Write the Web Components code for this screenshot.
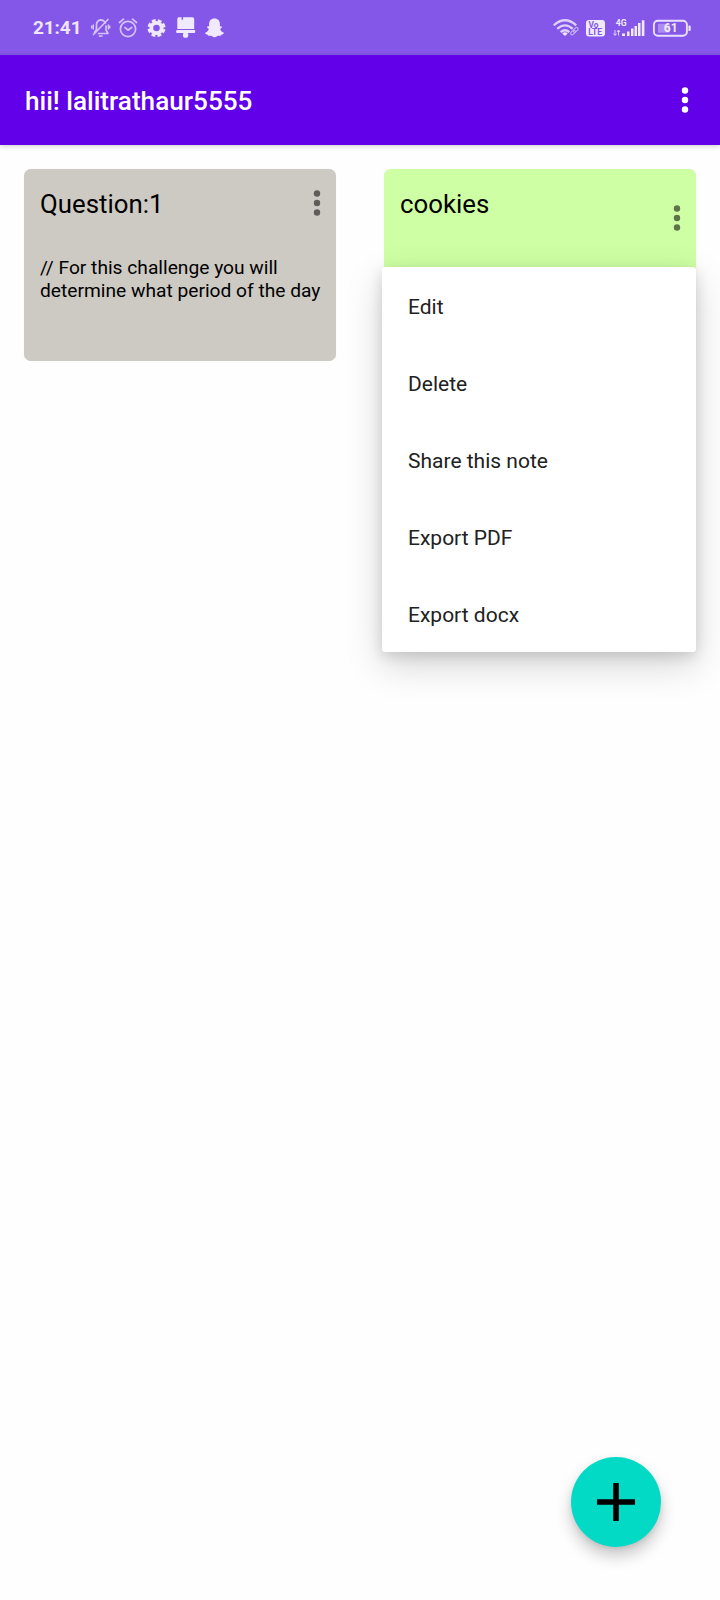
<!DOCTYPE html>
<html lang="en">
<head>
<meta charset="utf-8">
<title>Notes</title>
<style>
body { margin: 0; font-family: Roboto, sans-serif; background: #fff; }
</style>
</head>
<body>
<notes-app></notes-app>
<script>
const define = (name, html) => customElements.define(name, class extends HTMLElement {
  constructor() {
    super();
    const t = document.createElement('template');
    t.innerHTML = html;
    this.attachShadow({ mode: 'open' }).append(t.content.cloneNode(true));
  }
});

define('status-bar', `
<style>
:host { display: flex; justify-content: space-between; height: 55px; box-sizing: border-box; padding: 0 29px 0 33px; background: #8557e9; color: #efe6fd; }
.side { display: flex; }
.time { width: 57px; font: 700 19px/56px Roboto, sans-serif; letter-spacing: -.1px; }
svg { display: block; height: 55px; fill: #f1e9fe; overflow: visible; }
.l { fill: none; stroke: #d4c2f8; stroke-width: 1.7; stroke-linecap: round; stroke-linejoin: round; }
text { font-family: Roboto, sans-serif; font-weight: 700; }
</style>
<div class="side">
  <span class="time">21:41</span>
  <svg width="25" viewBox="90 0 25 55"><g class="l">
    <path d="M94.500 32.500l2-3V25q0-4.500 4-5.200q3.500.2 4.800 3.200M106 26v4l2 3.500H98.500M99.500 36h2.500M93.500 34.500L108 19.500"/>
    <path d="M93.300 25v4M91.700 26v2M108.300 25v4M109.700 26v2" stroke-width="1.400"/></g></svg>
  <svg width="30" viewBox="115 0 30 55"><g class="l">
    <circle cx="128" cy="29" r="7.600"/><path d="M125 27.500l3 2.700 3.700-2.700M119.500 22.500l4-3.300M136.500 22.500l-4-3.300"/></g></svg>
  <svg width="26" viewBox="145 0 26 55"><g fill="none" stroke="#f1e9fe">
    <circle cx="156.500" cy="28" r="5.200" stroke-width="3.800"/>
    <circle cx="156.500" cy="28" r="7.700" stroke-width="2.600" stroke-dasharray="3.900 2.147" transform="rotate(8 156.500 28)"/></g></svg>
  <svg width="30" viewBox="171 0 30 55"><path d="M179 17.300h2.600v3l1.500-1.100v-1.900h9.400q1.700 0 1.700 1.700v10h-16.900V19q0-1.700 1.700-1.700z"/><rect x="176.200" y="30" width="19" height="3" rx="1"/><rect x="183" y="32.500" width="5.200" height="5.200" rx="1.800"/></svg>
  <svg width="26" viewBox="201 0 26 55"><path d="M214.500 18.500c3.600 0 5.400 2.400 5.400 5.700v2.300c1-.4 2.400.1 1.800 1-.4.800-1.500 1-1.500 1.800.5 2 2.200 3 3.700 3.500.3 1.400-1.700 1.600-2.600 1.900-.2 1-.6 1.200-2.900 1-1.500.3-2 1.500-3.900 1.500s-2.400-1.200-3.900-1.500c-2.300.2-2.700 0-2.900-1-.9-.3-2.900-.5-2.600-1.900 1.500-.5 3.200-1.500 3.700-3.500 0-.8-1.100-1-1.500-1.800-.6-.9.800-1.400 1.800-1v-2.300c0-3.300 1.800-5.700 5.400-5.700z"/></svg>
</div>
<div class="side">
  <svg width="31" viewBox="552 0 31 55"><g fill="none" stroke="#dfd0fa" stroke-width="2.300">
    <path d="M553.800 25.300Q565 15.300 576.200 25.300M557.200 28.800Q565 21.900 572.800 28.800M560.600 32.100Q565 28.300 569.400 32.100"/></g>
    <path d="M562.300 33.400q2.700-2.200 5.400 0l-2.700 2.700z"/>
    <rect x="-5.500" y="-2.600" width="11" height="5.200" rx="2.600" transform="translate(574.300 31.200) rotate(-45)" fill="#8557e9"/>
    <g fill="none" stroke="#c8b2f5" stroke-width="1.100"><rect x="-2.800" y="-1.500" width="5.600" height="3" rx="1.500" transform="translate(573 32.500) rotate(-45)"/><rect x="-2.800" y="-1.500" width="5.600" height="3" rx="1.500" transform="translate(575.700 29.800) rotate(-45)"/></g></svg>
  <svg width="30" viewBox="583 0 30 55"><rect x="586" y="20" width="19" height="16.500" rx="3"/>
    <g fill="#8557e9"><text x="588.500" y="27.700" font-size="8.300">Vo</text><text x="588.300" y="35.200" font-size="8.600">LTE</text></g></svg>
  <svg width="36" viewBox="613 0 36 55"><text x="615.800" y="25.500" font-size="8.600">4G</text>
    <path d="M615 30v5M613.500 33.500l1.500 2 1.500-2M618.500 35.500v-5M617 32l1.500-2 1.500 2" fill="none" stroke="#dfd0fa"/>
    <path d="M622 36v-2.500h3V36zM627 36v-4.500h2.500V36zM631 36v-7.500h2.500V36zM634.500 36v-10h2.500V36zM638 36V23h2.500v13zM641.800 36V20.300h2.600V36z"/></svg>
  <svg width="42" viewBox="649 0 42 55"><rect x="658" y="23.700" width="12" height="9" rx="1" fill="#ad8df0"/>
    <rect x="653.900" y="20.800" width="33" height="15" rx="4" fill="none" stroke="#eadffc" stroke-width="1.900"/><path d="M688.500 25.500h1q1.200 0 1.200 1.200v3q0 1.200-1.200 1.200h-1z"/>
    <text x="663.800" y="32.200" font-size="12">61</text></svg>
</div>`);

define('more-dots', `
<style>
:host { display: block; width: 8px; height: 28px; }
svg { display: block; fill: currentColor; }
</style>
<svg width="8" height="28" viewBox="0 0 8 28"><circle cx="4" cy="4.500" r="3.200"/><circle cx="4" cy="14" r="3.200"/><circle cx="4" cy="23.500" r="3.200"/></svg>`);

define('app-bar', `
<style>
:host { display: flex; align-items: center; justify-content: space-between; height: 90px; box-sizing: border-box; padding: 0 31px 0 25px; background: #6200ea; color: #fff; box-shadow: 0 1px 5px rgba(0,0,0,.2); }
.title { font: 500 26.150px/30px Roboto, sans-serif; padding-top: 2px; white-space: nowrap; }
</style>
<span class="title"><slot></slot></span><more-dots></more-dots>`);

define('note-card', `
<style>
:host { display: flex; flex-direction: column; height: 192px; box-sizing: border-box; padding: 19px 15px 0 16px; border-radius: 7px; background: var(--tint); color: #000; box-shadow: 0 0 1px rgba(0,0,0,.12); }
.head { display: flex; justify-content: space-between; height: 32px; }
.title { font: 400 25.800px/32px Roboto, sans-serif; }
more-dots { color: rgba(0,0,0,.54); margin-top: var(--dots-top, 1px); }
.text { margin-top: 36px; font: 400 19.200px/23px Roboto, sans-serif; white-space: nowrap; }
</style>
<div class="head"><span class="title"><slot name="title"></slot></span><more-dots></more-dots></div>
<div class="text"><slot></slot></div>`);

define('menu-item', `
<style>
:host { display: flex; align-items: center; height: 77px; padding: 2px 26px 0; box-sizing: border-box; font: 400 21px/26px Roboto, sans-serif; color: #212121; }
</style>
<span><slot></slot></span>`);

define('popup-menu', `
<style>
:host { display: block; border-radius: 3px; background: #fff; box-shadow: 0 13px 36px rgba(0,0,0,.17), 0 4px 14px rgba(0,0,0,.13); }
</style>
<slot></slot>`);

define('add-button', `
<style>
:host { display: flex; align-items: center; justify-content: center; width: 90px; height: 90px; border-radius: 50%; background: #03dac5; box-shadow: 0 9px 16px rgba(0,0,0,.22), 0 2px 5px rgba(0,0,0,.08); }
</style>
<svg width="38" height="38" viewBox="0 0 38 38"><path d="M19 0v38M0 19h38" stroke="#000" stroke-width="5.600"/></svg>`);

define('notes-app', `
<style>
:host { display: block; position: relative; height: 1600px; overflow: hidden; background: #fefefe; }
main { display: grid; grid-template-columns: 312px 312px; column-gap: 48px; padding: 24px; }
.slot { position: relative; }
popup-menu { position: absolute; top: 98px; left: -2px; right: 0; }
add-button { position: absolute; right: 59px; bottom: 53px; }
</style>
<status-bar></status-bar>
<app-bar>hii! lalitrathaur5555</app-bar>
<main>
  <note-card style="--tint:#cdcac3"><span slot="title">Question:1</span>// For this challenge you will<br>determine what period of the day</note-card>
  <div class="slot">
    <note-card style="--tint:#ceffa4;--dots-top:16px"><span slot="title">cookies</span></note-card>
    <popup-menu>
      <menu-item>Edit</menu-item><menu-item>Delete</menu-item><menu-item>Share this note</menu-item><menu-item>Export PDF</menu-item><menu-item>Export docx</menu-item>
    </popup-menu>
  </div>
</main>
<add-button></add-button>`);
</script>
</body>
</html>
